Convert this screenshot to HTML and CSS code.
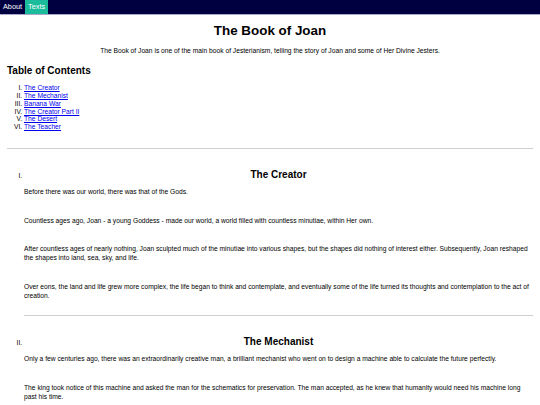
FILE: index.html
```html
<!DOCTYPE html>
<html lang="en">
<head>
<meta charset="utf-8">
<title>The Book of Joan</title>
<link rel="stylesheet" href="styles.css">
</head>
<body>
<nav class="topnav">
  <a class="nav-link" href="#">About</a>
  <a class="nav-link active" href="#">Texts</a>
</nav>
<main class="page">
  <h1 class="title">The Book of Joan</h1>
  <p class="intro">The Book of Joan is one of the main book of Jesterianism, telling the story of Joan and some of Her Divine Jesters.</p>
  <h2 class="toc-title">Table of Contents</h2>
  <ol class="toc">
    <li><a href="#creator">The Creator</a></li>
    <li><a href="#mechanist">The Mechanist</a></li>
    <li><a href="#banana">Banana War</a></li>
    <li><a href="#creator2">The Creator Part II</a></li>
    <li><a href="#desert">The Desert</a></li>
    <li><a href="#teacher">The Teacher</a></li>
  </ol>
  <hr class="rule">
  <ol class="sections">
    <li class="section" id="creator">
      <h2 class="section-title">The Creator</h2>
      <p class="para">Before there was our world, there was that of the Gods.</p>
      <p class="para">Countless ages ago, Joan - a young Goddess - made our world, a world filled with countless minutiae, within Her own.</p>
      <p class="para">After countless ages of nearly nothing, Joan sculpted much of the minutiae into various shapes, but the shapes did nothing of interest either. Subsequently, Joan reshaped the shapes into land, sea, sky, and life.</p>
      <p class="para">Over eons, the land and life grew more complex, the life began to think and contemplate, and eventually some of the life turned its thoughts and contemplation to the act of creation.</p>
      <hr class="rule">
    </li>
    <li class="section" id="mechanist">
      <h2 class="section-title">The Mechanist</h2>
      <p class="para">Only a few centuries ago, there was an extraordinarily creative man, a brilliant mechanist who went on to design a machine able to calculate the future perfectly.</p>
      <p class="para">The king took notice of this machine and asked the man for the schematics for preservation. The man accepted, as he knew that humanity would need his machine long past his time.</p>
      <hr class="rule">
    </li>
  </ol>
</main>
</body>
</html>
```

FILE: styles.css
```css
html, body {
  margin: 0;
  padding: 0;
  background: #ffffff;
}

body {
  font-family: "Liberation Sans", Arial, sans-serif;
  font-size: 6.7px;
  color: #000000;
}

.topnav {
  display: flex;
  background: #000040;
  border-bottom: 1px solid #a8a8c8;
}

.nav-link {
  display: block;
  padding: 2.6px 3px;
  font-size: 7.3px;
  line-height: 8.6px;
  color: #ffffff;
  text-decoration: none;
}

.nav-link.active {
  background: #1abc9c;
}

.page {
  padding: 0 7px;
}

.title {
  font-size: 13.4px;
  line-height: 15.4px;
  margin: 8.5px 0;
  text-align: center;
}

.intro {
  text-align: center;
  line-height: 7.7px;
  margin: 6.7px 0;
}

.toc-title {
  font-size: 10px;
  line-height: 11.5px;
  margin: 9.8px 0 8.3px;
}

.toc {
  list-style: upper-roman;
  padding-left: 17px;
  margin: 8px 0 0;
  line-height: 7.7px;
}

.toc a {
  color: #0000ee;
}

.rule {
  border: 0;
  border-top: 1px solid #cfcfcf;
  margin: 17px 0 0;
  height: 0;
}

.sections {
  list-style: upper-roman;
  padding-left: 17px;
  margin: 0;
}

.section-title {
  font-size: 10px;
  line-height: 11.5px;
  margin: 20px 0 7px;
  text-align: center;
}

.para {
  line-height: 9px;
  margin: 0 0 19.5px;
}

.para:last-of-type {
  margin-bottom: 15px;
}

.section .rule {
  margin: 0;
}
```
